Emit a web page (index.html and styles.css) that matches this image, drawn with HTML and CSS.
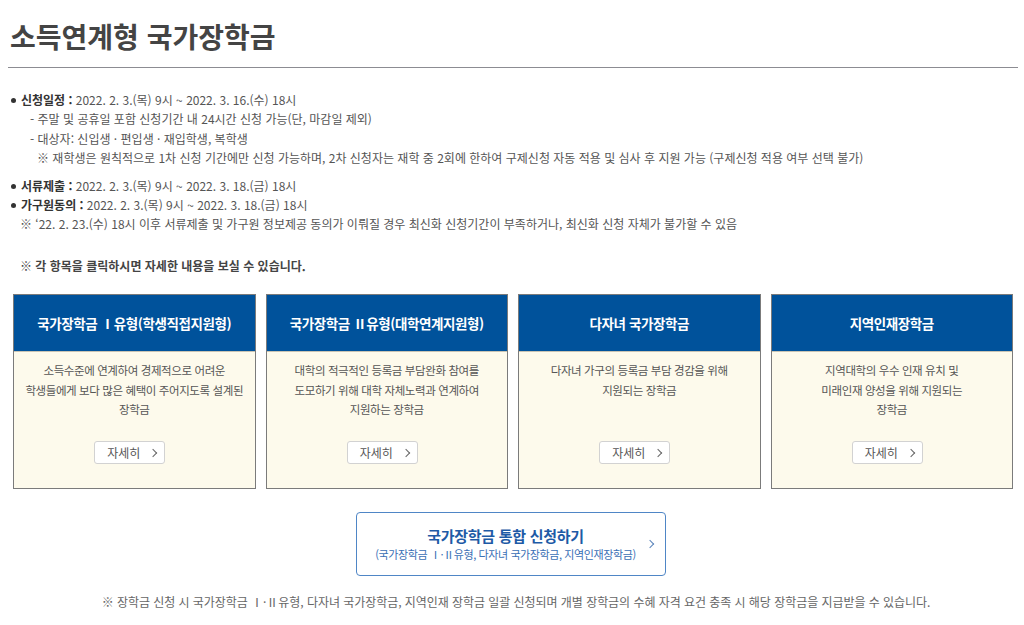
FILE: index.html
```html
<!DOCTYPE html>
<html lang="ko">
<head>
<meta charset="utf-8">
<link rel="stylesheet" href="styles.css">
</head>
<body>
<div class="page">
  <h1 class="title">소득연계형 국가장학금</h1>
  <div class="info">
    <p class="bullet"><b>신청일정 :</b> 2022. 2. 3.(목) 9시 ~ 2022. 3. 16.(수) 18시</p>
    <p class="sub">- 주말 및 공휴일 포함 신청기간 내 24시간 신청 가능(단, 마감일 제외)</p>
    <p class="sub">- 대상자: 신입생 · 편입생 · 재입학생, 복학생</p>
    <p class="note2">※ 재학생은 원칙적으로 1차 신청 기간에만 신청 가능하며, 2차 신청자는 재학 중 2회에 한하여 구제신청 자동 적용 및 심사 후 지원 가능 (구제신청 적용 여부 선택 불가)</p>
    <p class="bullet gap"><b>서류제출 :</b> 2022. 2. 3.(목) 9시 ~ 2022. 3. 18.(금) 18시</p>
    <p class="bullet"><b>가구원동의 :</b> 2022. 2. 3.(목) 9시 ~ 2022. 3. 18.(금) 18시</p>
    <p class="note1">※ ‘22. 2. 23.(수) 18시 이후 서류제출 및 가구원 정보제공 동의가 이뤄질 경우 최신화 신청기간이 부족하거나, 최신화 신청 자체가 불가할 수 있음</p>
    <p class="click">※ 각 항목을 클릭하시면 자세한 내용을 보실 수 있습니다.</p>
  </div>
  <div class="cards">
    <div class="card">
      <div class="card-head">국가장학금 Ⅰ유형(학생직접지원형)</div>
      <div class="card-body">
        <p>소득수준에 연계하여 경제적으로 어려운<br>학생들에게 보다 많은 혜택이 주어지도록 설계된<br>장학금</p>
        <a class="more">자세히 <span class="chev"></span></a>
      </div>
    </div>
    <div class="card">
      <div class="card-head">국가장학금 Ⅱ유형(대학연계지원형)</div>
      <div class="card-body">
        <p>대학의 적극적인 등록금 부담완화 참여를<br>도모하기 위해 대학 자체노력과 연계하여<br>지원하는 장학금</p>
        <a class="more">자세히 <span class="chev"></span></a>
      </div>
    </div>
    <div class="card">
      <div class="card-head">다자녀 국가장학금</div>
      <div class="card-body">
        <p>다자녀 가구의 등록금 부담 경감을 위해<br>지원되는 장학금</p>
        <a class="more">자세히 <span class="chev"></span></a>
      </div>
    </div>
    <div class="card">
      <div class="card-head">지역인재장학금</div>
      <div class="card-body">
        <p>지역대학의 우수 인재 유치 및<br>미래인재 양성을 위해 지원되는<br>장학금</p>
        <a class="more">자세히 <span class="chev"></span></a>
      </div>
    </div>
  </div>
  <div class="apply-wrap">
    <a class="apply">
      <span class="apply-title">국가장학금 통합 신청하기</span>
      <span class="apply-sub">(국가장학금 Ⅰ·Ⅱ유형, 다자녀 국가장학금, 지역인재장학금)</span>
      <span class="apply-chev"></span>
    </a>
  </div>
  <p class="foot">※ 장학금 신청 시 국가장학금 Ⅰ·Ⅱ유형, 다자녀 국가장학금, 지역인재 장학금 일괄 신청되며 개별 장학금의 수혜 자격 요건 충족 시 해당 장학금을 지급받을 수 있습니다.</p>
</div>
</body>
</html>
```
FILE: styles.css
```css
* { box-sizing: border-box; }
html, body { margin: 0; padding: 0; background: #fff; }
body {
  font-family: "Noto Sans CJK KR", "Noto Sans", sans-serif;
  color: #555;
  font-size: 12px;
}
.page { padding: 0 6px 0 8px; }
.title {
  margin: 0;
  padding: 16px 0 0 2px;
  height: 68px;
  font-size: 28px;
  font-weight: 700;
  color: #444;
  line-height: 40px;
  letter-spacing: 0;
  border-bottom: 1px solid #8c8c92;
}
.info { padding-top: 22px; }
.info p { margin: 0; line-height: 19.4px; letter-spacing: 0; }
.bullet { position: relative; padding-left: 13px; }
.bullet::before {
  content: "";
  position: absolute;
  left: 3px; top: 8px;
  width: 5px; height: 5px; border-radius: 50%;
  background: #333;
}
.bullet b { color: #333; font-weight: 700; }
.gap { margin-top: 8px !important; }
.sub { padding-left: 22px; }
.note2 { padding-left: 29px; }
.note1 { padding-left: 12px; }
.click {
  padding-left: 12px;
  margin-top: 22px !important;
  font-weight: 700;
  color: #444;
}
.cards {
  display: grid;
  grid-template-columns: repeat(4, 1fr);
  gap: 10px;
  margin: 19px 5px 0 5px;
}
.card {
  border: 1px solid #7b7b7b;
  background: #fdfaec;
  height: 195px;
  display: flex;
  flex-direction: column;
}
.card-head {
  background: #00529b;
  color: #fff;
  height: 57px;
  display: flex;
  align-items: center;
  justify-content: center;
  font-size: 13.5px;
  font-weight: 700;
  letter-spacing: -0.4px;
  border-bottom: 1px solid #c9c4b4;
}
.card-body {
  flex: 1;
  display: flex;
  flex-direction: column;
  align-items: center;
  padding-top: 9px;
}
.card-body p {
  margin: 0;
  text-align: center;
  line-height: 19.5px;
  color: #555;
  height: 74px;
  font-size: 11.5px;
  letter-spacing: -0.4px;
}
.more {
  display: flex;
  align-items: center;
  justify-content: center;
  gap: 10px;
  width: 71px;
  height: 23px;
  margin-top: 6px;
  margin-right: 9px;
  background: #fff;
  border: 1px solid #d2d2d2;
  border-radius: 3px;
  font-size: 12px;
  color: #555;
  padding-left: 4px;
}
.chev {
  width: 6px; height: 6px;
  border-top: 1px solid #666;
  border-right: 1px solid #666;
  transform: rotate(45deg);
}
.apply-wrap { display: flex; justify-content: center; margin-top: 23px; padding-right: 5px; }
.apply {
  position: relative;
  width: 310px;
  height: 64px;
  border: 1px solid #4f86c6;
  border-radius: 4px;
  display: flex;
  flex-direction: column;
  align-items: center;
  justify-content: center;
  color: #1e5aa6;
}
.apply-title { font-size: 15px; font-weight: 700; line-height: 20px; letter-spacing: -0.3px; margin-left: -10px; }
.apply-sub { font-size: 11px; line-height: 16px; color: #3a6fb5; letter-spacing: -0.4px; margin-left: -10px; }
.apply-chev {
  position: absolute;
  right: 12px; top: 28px;
  width: 6px; height: 6px;
  border-top: 1px solid #5a84bb;
  border-right: 1px solid #5a84bb;
  transform: rotate(45deg);
}
.foot {
  margin: 17px 0 0 0;
  text-align: center;
  font-size: 12px;
  color: #666;
  letter-spacing: -0.05px;
  padding-left: 6px;
}
```
